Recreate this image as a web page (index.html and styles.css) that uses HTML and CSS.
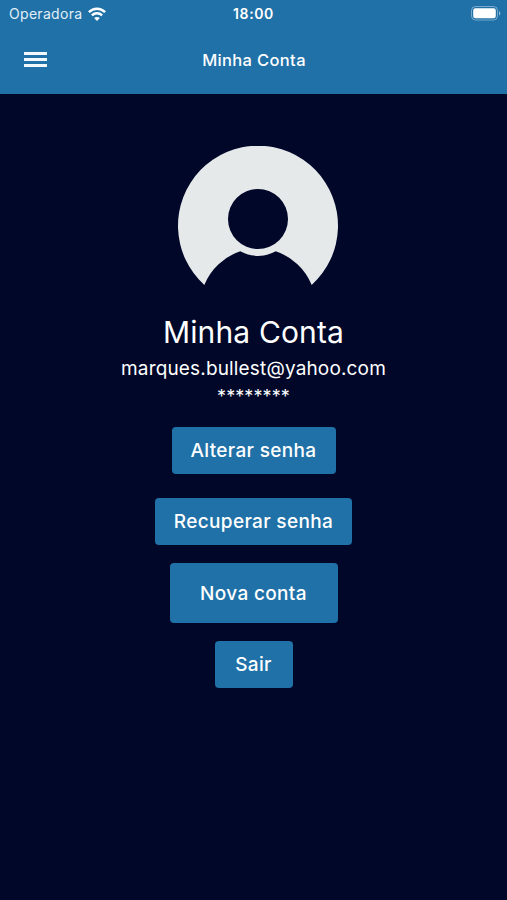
FILE: index.html
```html
<!DOCTYPE html>
<html lang="pt-BR">
<head>
    <meta charset="UTF-8">
    <meta name="viewport" content="width=device-width, initial-scale=1.0">
    <title>Minha Conta</title>
    <link rel="stylesheet" href="styles.css">
</head>
<body>
    <header class="header">
        <div class="status-bar">
            <div class="carrier">
                <span>Operadora</span>
                <svg class="wifi-icon" width="18" height="14" viewBox="0 0 18 14" fill="none" stroke="#fff" stroke-width="2.5">
                    <path d="M0.9 5.2C5.5 0.6 12.5 0.6 17.1 5.2"/>
                    <path d="M3.9 8.4C6.8 5.6 11.2 5.6 14.1 8.4"/>
                    <path d="M9 14L6.2 11.1C7.8 9.6 10.2 9.6 11.8 11.1Z" fill="#fff" stroke="none"/>
                </svg>
            </div>
            <span class="clock">18:00</span>
            <svg class="battery-icon" width="30" height="15" viewBox="0 0 30 15">
                <rect x="0.5" y="0.5" width="26" height="13.5" rx="4" fill="none" stroke="#fff" stroke-opacity="0.4"/>
                <rect x="2.2" y="2.2" width="22.6" height="10.1" rx="2.2" fill="#fff"/>
                <path d="M28 5v4.6c1.9-0.8 1.9-3.8 0-4.6z" fill="#fff" fill-opacity="0.5"/>
            </svg>
        </div>
        <nav class="nav-bar">
            <button class="menu-button" aria-label="Menu">
                <span></span>
                <span></span>
                <span></span>
            </button>
            <h1 class="nav-title">Minha Conta</h1>
        </nav>
    </header>

    <main class="account">
        <svg class="avatar" width="160" height="140" viewBox="0 0 160 140">
            <path fill="#e6e9ea" fill-rule="evenodd" d="M26.3 139A80 80 0 1 1 133.7 139A58.2 58.2 0 0 0 97.7 105.3A36.5 36.5 0 0 1 62.3 105.3A58.2 58.2 0 0 0 26.3 139ZM80 43A30 30 0 1 0 80 103A30 30 0 1 0 80 43Z"/>
        </svg>
        <h2 class="account-title">Minha Conta</h2>
        <p class="email">marques.bullest@yahoo.com</p>
        <p class="password">********</p>
        <div class="actions">
            <button class="btn btn-change">Alterar senha</button>
            <button class="btn btn-recover">Recuperar senha</button>
            <button class="btn btn-new">Nova conta</button>
            <button class="btn btn-exit">Sair</button>
        </div>
    </main>
</body>
</html>
```
FILE: styles.css
```css
* {
    margin: 0;
    padding: 0;
    box-sizing: border-box;
}

body {
    min-height: 100vh;
    font-family: Inter, "Liberation Sans", sans-serif;
    background-color: #000729;
    color: #fff;
}

.header {
    height: 94px;
    background-color: #1f71a8;
}

.status-bar {
    height: 27px;
    padding: 0 6px 0 9px;
    display: grid;
    grid-template-columns: 1fr auto 1fr;
    align-items: center;
}

.carrier {
    display: flex;
    align-items: center;
    gap: 6px;
    font-size: 14px;
    letter-spacing: 0.3px;
    color: #e3eff7;
}

.clock {
    margin-right: 3px;
    font-size: 14px;
    font-weight: 600;
    letter-spacing: 0.6px;
}

.battery-icon {
    justify-self: end;
}

.nav-bar {
    height: 65px;
    padding: 0 24px;
    display: grid;
    grid-template-columns: 1fr auto 1fr;
    align-items: center;
}

.menu-button {
    width: 23px;
    display: flex;
    flex-direction: column;
    gap: 3px;
    background: none;
    border: none;
}

.menu-button span {
    height: 3px;
    background-color: #f2f8fc;
}

.nav-title {
    padding-left: 1px;
    font-size: 16.5px;
    font-weight: 500;
    letter-spacing: 0.35px;
}

.account {
    padding-top: 52px;
    display: flex;
    flex-direction: column;
    align-items: center;
}

.avatar {
    margin-left: 8px;
}

.account-title {
    margin-top: 28px;
    font-size: 30px;
    font-weight: 400;
    line-height: 36px;
    letter-spacing: 0.15px;
}

.email {
    margin-top: 6px;
    font-size: 19px;
    line-height: 26px;
    letter-spacing: 0.16px;
}

.password {
    margin-top: 2px;
    font-size: 18px;
    line-height: 26px;
    letter-spacing: 0.1px;
}

.actions {
    margin-top: 17px;
    display: flex;
    flex-direction: column;
    align-items: center;
}

.btn {
    height: 47px;
    border: none;
    border-radius: 4px;
    background-color: #1f71a8;
    color: #fff;
    font-family: inherit;
    font-size: 19px;
    font-weight: 500;
    letter-spacing: 0.35px;
}

.btn-change {
    width: 164px;
}

.btn-recover {
    width: 197px;
    margin-top: 24px;
}

.btn-new {
    width: 168px;
    height: 60px;
    margin-top: 18px;
}

.btn-exit {
    width: 78px;
    margin-top: 18px;
}
```
